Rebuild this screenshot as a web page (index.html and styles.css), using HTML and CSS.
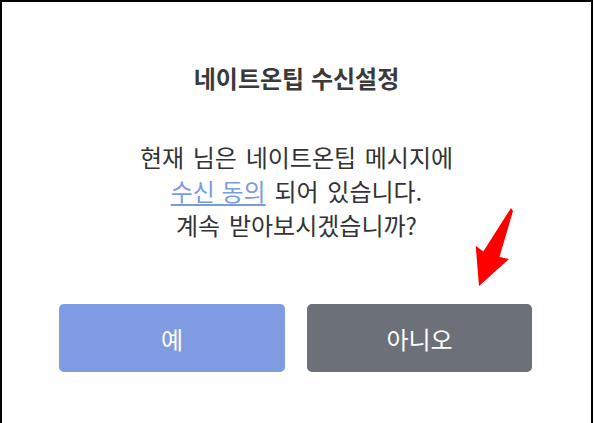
FILE: index.html
```html
<!DOCTYPE html>
<html lang="ko">
<head>
<meta charset="utf-8">
<link rel="stylesheet" href="styles.css">
</head>
<body>
<div class="dialog">
  <h1 class="title">네이트온팁 수신설정</h1>
  <p class="message">현재 님은 네이트온팁 메시지에<br><a class="link" href="#">수신 동의</a> 되어 있습니다.<br>계속 받아보시겠습니까?</p>
  <div class="actions">
    <button class="btn btn-yes">예</button>
    <button class="btn btn-no">아니오</button>
  </div>
  <svg class="arrow" width="50" height="90" viewBox="470 205 50 90" aria-hidden="true">
    <polygon points="511,208 513,211 499.5,257 509,259 479,286 475.7,245.7 483.3,251.5" fill="#ff0000"/>
  </svg>
</div>
</body>
</html>
```

FILE: styles.css
```css
html, body {
  margin: 0;
  padding: 0;
  background: #ffffff;
}

body {
  font-family: "Noto Sans CJK KR", "Noto Sans", sans-serif;
}

.dialog {
  position: relative;
  box-sizing: border-box;
  width: 593px;
  height: 423px;
  border: 2px solid #000000;
  border-bottom: none;
  padding-top: 61px;
  text-align: center;
}

.title {
  margin: 0;
  font-size: 24px;
  line-height: 30px;
  font-weight: 700;
  color: #3a3a3a;
  word-spacing: 0;
}

.message {
  margin: 47px 0 0;
  font-size: 24px;
  line-height: 34px;
  font-weight: 400;
  color: #333333;
  word-spacing: 2px;
}

.link {
  color: #7b9be1;
  text-decoration: underline;
  text-underline-offset: 3px;
  word-spacing: 0;
}

.actions {
  display: flex;
  gap: 22px;
  padding: 0 57px;
  margin-top: 62px;
}

.btn {
  height: 68px;
  border: none;
  border-radius: 5px;
  color: #ffffff;
  font-family: "Noto Sans CJK KR", "Noto Sans", sans-serif;
  font-size: 24px;
  padding: 0;
}

.btn-yes {
  width: 226px;
  background: #7f9be2;
}

.btn-no {
  width: 225px;
  background: #6c7078;
}

.arrow {
  position: absolute;
  left: 468px;
  top: 203px;
}
```
